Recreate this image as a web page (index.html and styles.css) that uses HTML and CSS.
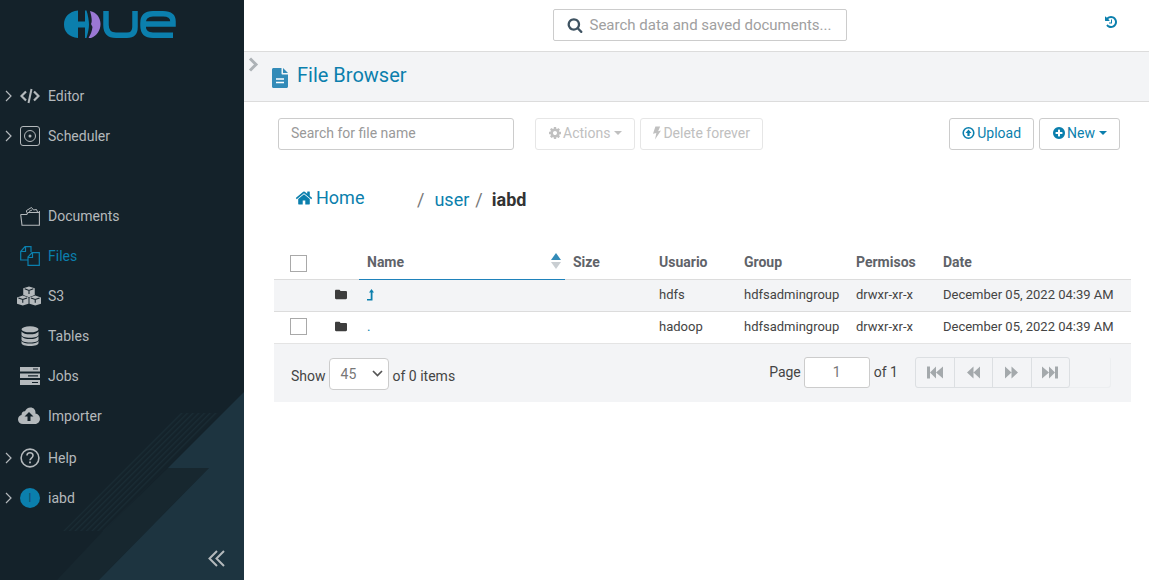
FILE: index.html
```html
<!DOCTYPE html>
<html lang="en">
<head>
    <meta charset="UTF-8">
    <title>Hue - File Browser</title>
    <link rel="stylesheet" href="styles.css">
</head>
<body>

    <!-- icon sprite -->
    <svg class="sprite" xmlns="http://www.w3.org/2000/svg">
        <symbol id="i-search" viewBox="0 0 1792 1792"><path d="M1216 832q0-185-131.500-316.500t-316.500-131.500-316.500 131.500-131.500 316.500 131.500 316.500 316.500 131.500 316.500-131.500 131.500-316.500zm512 832q0 52-38 90t-90 38q-54 0-90-38l-343-342q-179 124-399 124-143 0-273.500-55.500t-225-150-150-225-55.500-273.500 55.500-273.500 150-225 225-150 273.500-55.500 273.500 55.500 225 150 150 225 55.500 273.500q0 220-124 399l343 343q37 37 37 90z"/></symbol>
        <symbol id="i-history" viewBox="0 0 1792 1792"><path d="M1664 896q0 156-61 298t-164 245-245 164-298 61q-172 0-327-72.500t-264-204.500q-7-10-6.500-22.500t8.500-20.500l137-138q10-9 25-9 16 2 23 12 73 95 179 147t225 52q104 0 198.500-40.500t163.500-109.500 109.500-163.500 40.500-198.500-40.500-198.500-109.500-163.500-163.500-109.500-198.500-40.500q-98 0-188 35.500t-160 101.500l137 138q31 30 14 69-17 40-59 40h-448q-26 0-45-19t-19-45v-448q0-42 40-59 39-17 69 14l130 129q107-101 244.500-156.500t284.500-55.500q156 0 298 61t245 164 164 245 61 298zm-640-288v448q0 14-9 23t-23 9h-320q-14 0-23-9t-9-23v-64q0-14 9-23t23-9h224v-352q0-14 9-23t23-9h64q14 0 23 9t9 23z"/></symbol>
        <symbol id="i-cog" viewBox="0 0 1792 1792"><path d="M1152 896q0-106-75-181t-181-75-181 75-75 181 75 181 181 75 181-75 75-181zm512-109v222q0 12-8 23t-20 13l-185 28q-19 54-39 91 35 50 107 138 10 12 10 25t-9 23q-27 37-99 108t-94 71q-12 0-26-9l-138-108q-44 23-91 38-16 136-29 186-7 28-36 28h-222q-14 0-24.500-8.500t-11.500-21.500l-28-184q-49-16-90-37l-141 107q-10 9-25 9-14 0-25-11-126-114-165-168-7-10-7-23 0-12 8-23 15-21 51-66.500t54-70.500q-27-50-41-99l-183-27q-13-2-21-12.500t-8-23.500v-222q0-12 8-23t19-13l186-28q14-46 39-92-40-57-107-138-10-12-10-24 0-10 9-23 26-36 98.500-107.500t94.500-71.500q13 0 26 10l138 107q44-23 91-38 16-136 29-186 7-28 36-28h222q14 0 24.500 8.500t11.500 21.500l28 184q49 16 90 37l142-107q9-9 24-9 13 0 25 10 129 119 165 170 7 8 7 22 0 12-8 23-15 21-51 66.500t-54 70.500q26 50 41 98l183 28q13 2 21 12.500t8 23.500z"/></symbol>
        <symbol id="i-plus" viewBox="0 0 1792 1792"><path d="M1344 960v-128q0-26-19-45t-45-19h-256v-256q0-26-19-45t-45-19h-128q-26 0-45 19t-19 45v256h-256q-26 0-45 19t-19 45v128q0 26 19 45t45 19h256v256q0 26 19 45t45 19h128q26 0 45-19t19-45v-256h256q26 0 45-19t19-45zm320-64q0 209-103 385.500t-279.500 279.500-385.500 103-385.500-103-279.500-279.500-103-385.500 103-385.500 279.500-279.500 385.500-103 385.500 103 279.500 279.500 103 385.500z"/></symbol>
        <symbol id="i-home" viewBox="0 0 1792 1792"><path d="M1472 992v480q0 26-19 45t-45 19h-384v-384h-256v384h-384q-26 0-45-19t-19-45v-480q0-1 .5-3t.5-3l575-474 575 474q1 2 1 6zm223-69l-62 74q-8 9-21 11h-3q-13 0-21-7l-692-577-692 577q-12 8-24 7-13-2-21-11l-62-74q-8-10-7-23.500t11-21.500l719-599q32-26 76-26t76 26l244 204v-195q0-14 9-23t23-9h192q14 0 23 9t9 23v408l219 182q10 8 11 21.500t-7 23.500z"/></symbol>
        <symbol id="i-folder" viewBox="0 0 14 12"><path d="M1.300 0.500h3.600c.7 0 1.100.4 1.300 1l.2.500h6.300c.7 0 1.300.5 1.300 1.300v6.900c0 .8-.6 1.300-1.300 1.300H1.300C.6 11.500 0 11 0 10.200V1.800C0 1 .6.500 1.300.5z"/></symbol>
        <symbol id="i-bolt" viewBox="0 0 10 16"><path d="M3 0h6L6.400 5.800 10 5 2.500 16l1.700-8L0 8.900z"/></symbol>
    </svg>

    <div class="app">

        <aside class="sidebar">
            <svg class="sidebar-bg" viewBox="0 0 244 580" xmlns="http://www.w3.org/2000/svg">
                <defs>
                    <pattern id="hatch" width="4" height="4" patternUnits="userSpaceOnUse" patternTransform="rotate(-45)">
                        <rect width="4" height="1.300" fill="#1a2c35"/>
                    </pattern>
                </defs>
                <polygon points="57,580 103,531 168,468 209,468 99,580" fill="#17272f"/>
                <polygon points="63,531 103,531 220,413 180,413" fill="url(#hatch)"/>
                <polygon points="244,392 168,468 209,468 99,580 244,580" fill="#1d3440"/>
            </svg>

            <div class="logo">
                <svg width="120" height="32" viewBox="60 8 120 32" xmlns="http://www.w3.org/2000/svg">
                    <path d="M78 10.500C69 11.500 64 17 64 24.500S69 37 78 38V27.500H85V38H86.500C88 33 89 28 89 24.500S88 15 86.500 10.500H85V21.500H78z" fill="#0b7fad"/>
                    <path d="M90 11C97 12.500 100.500 18 100.500 24S97 36 91 38H88.500C90.500 35 92 31 92.500 27L91 24C92.500 22 91.500 16 90 11z" fill="#9a78d4"/>
                    <g fill="none" stroke="#0b7fad" stroke-width="5.500">
                        <path d="M106 11V25Q106 35.300 116 35.300H127Q135 35.300 135 27V11"/>
                        <path d="M143 24H173V21.500Q173 13.700 163 13.700H153Q143 13.700 143 23V25.500Q143 35.300 153 35.300H173"/>
                    </g>
                </svg>
            </div>

            <nav class="nav">
                <a class="nav-item">
                    <span class="caret"><svg width="7" height="12" viewBox="0 0 7 12"><path d="M1 1l5 5-5 5" fill="none" stroke="currentColor" stroke-width="1.200"/></svg></span>
                    <svg class="nav-icon" viewBox="0 0 20 20"><path d="M6 5.500L1.500 10 6 14.500M14 5.500l4.500 4.500L14 14.500" fill="none" stroke="currentColor" stroke-width="2.200"/><path d="M11.500 3l-3 14" fill="none" stroke="currentColor" stroke-width="2"/></svg>
                    <span>Editor</span>
                </a>
                <a class="nav-item">
                    <span class="caret"><svg width="7" height="12" viewBox="0 0 7 12"><path d="M1 1l5 5-5 5" fill="none" stroke="currentColor" stroke-width="1.200"/></svg></span>
                    <svg class="nav-icon" viewBox="0 0 20 20"><rect x=".5" y=".5" width="19" height="19" rx="2.500" fill="none" stroke="currentColor"/><circle cx="10" cy="10" r="5.500" fill="none" stroke="currentColor"/><circle cx="10" cy="10" r="1.500" fill="currentColor"/></svg>
                    <span>Scheduler</span>
                </a>

                <div class="nav-group">
                    <a class="nav-item">
                        <span class="caret"></span>
                        <svg class="nav-icon" viewBox="0 0 20 20"><path d="M.7 8.500L2 19.300h17.400V5M.7 8.500h6L8 6.500h11.400" fill="none" stroke="currentColor" stroke-width="1.100"/><path d="M6.500 6.500V4.500l5-3 2 2.500 3-.5 1 2.500M9 5.500l3-1.500" fill="none" stroke="currentColor" stroke-width="1"/></svg>
                        <span>Documents</span>
                    </a>
                    <a class="nav-item active">
                        <span class="caret"></span>
                        <svg class="nav-icon" viewBox="0 0 20 20"><path d="M8 14H.7V5.500L5 .7h6V6M5.500 .7V5.500H.7" fill="none" stroke="currentColor" stroke-width="1.200"/><path d="M8 19.300V11l4-4.300h7.300v12.600zM12.500 7v4.500H8" fill="none" stroke="currentColor" stroke-width="1.200"/></svg>
                        <span>Files</span>
                    </a>
                    <a class="nav-item">
                        <span class="caret"></span>
                        <svg class="nav-icon icon-wide" viewBox="0 0 25 20"><path d="M12.500 0l6 2v7l-6 2.200-6-2.200V2z" fill="currentColor"/><path d="M6 9.500l6 2.100V18l-6 2-6-2v-6.500zM19 9.500l6 2V18l-6 2-6-2v-6.400z" fill="currentColor"/><path d="M8 2.500l4.500 1.700L17 2.500M12.500 4.200V8M1.500 12l4.500 1.600 4.500-1.600M6 13.600V17M14.500 12l4.500 1.600 4.500-1.600M19 13.600V17" fill="none" stroke="#14222a" stroke-width="1.100"/></svg>
                        <span>S3</span>
                    </a>
                    <a class="nav-item">
                        <span class="caret"></span>
                        <svg class="nav-icon" viewBox="0 0 20 20"><ellipse cx="10" cy="3.300" rx="8.500" ry="3" fill="currentColor"/><path d="M1.500 5.500c1.500 2 4.500 2.800 8.500 2.800s7-.8 8.500-2.800v3.200c0 1.800-3.500 3-8.500 3s-8.500-1.200-8.500-3zM1.500 10.300c1.500 2 4.500 2.800 8.500 2.800s7-.8 8.500-2.800v3.200c0 1.800-3.500 3-8.500 3s-8.500-1.200-8.500-3zM1.500 15c1.500 2 4.500 2.500 8.500 2.500s7-.5 8.500-2.500v2c0 1.800-3.500 3-8.500 3s-8.500-1.200-8.500-3z" fill="currentColor"/></svg>
                        <span>Tables</span>
                    </a>
                    <a class="nav-item">
                        <span class="caret"></span>
                        <svg class="nav-icon" viewBox="0 0 20 20"><path d="M0 1h20v4.500H0zM0 7.500h20V12H0zM0 14h20v5H0z" fill="currentColor"/><path d="M13 3h5M8 9.800h10M12 16.500h6" stroke="#14222a" stroke-width="1.200"/></svg>
                        <span>Jobs</span>
                    </a>
                    <a class="nav-item">
                        <span class="caret"></span>
                        <svg class="nav-icon icon-wide" viewBox="0 0 22 20"><path d="M5 18C2 18 0 16 0 13.500S1.500 9.500 3.500 9C3.500 6.500 5 5 7 5.200 8 3 10 1.500 12.500 1.500c3 0 5 2.300 5 5 0 .3 0 .7-.1 1 2.500.3 4.600 2.500 4.600 5.200S20 18 17 18z" fill="currentColor"/><path d="M11 6l4.500 4.500h-3V15h-3v-4.500h-3z" fill="#14222a"/></svg>
                        <span>Importer</span>
                    </a>
                </div>

                <div class="nav-group-small">
                    <a class="nav-item">
                        <span class="caret"><svg width="7" height="12" viewBox="0 0 7 12"><path d="M1 1l5 5-5 5" fill="none" stroke="currentColor" stroke-width="1.200"/></svg></span>
                        <svg class="nav-icon" viewBox="0 0 20 20"><circle cx="10" cy="10" r="8.900" fill="none" stroke="currentColor" stroke-width="1.600"/><path d="M7 7.500C7 5.500 8.500 4.800 10 4.800s3 1 3 2.700c0 2.500-3 2.500-3 4.800" fill="none" stroke="currentColor" stroke-width="1.600"/><rect x="9.100" y="13.500" width="1.800" height="1.800" fill="currentColor"/></svg>
                        <span>Help</span>
                    </a>
                    <a class="nav-item">
                        <span class="caret"><svg width="7" height="12" viewBox="0 0 7 12"><path d="M1 1l5 5-5 5" fill="none" stroke="currentColor" stroke-width="1.200"/></svg></span>
                        <span class="avatar">I</span>
                        <span>iabd</span>
                    </a>
                </div>
            </nav>

            <div class="collapse">
                <svg width="17" height="17" viewBox="0 0 17 17"><path d="M9 1L1.500 8.500 9 16M16 1L8.500 8.500 16 16" fill="none" stroke="currentColor" stroke-width="2"/></svg>
            </div>
        </aside>

        <main class="main">

            <header class="topbar">
                <div class="global-search">
                    <svg class="icon-search"><use href="#i-search"/></svg>
                    <span>Search data and saved documents...</span>
                </div>
                <svg class="icon-history"><use href="#i-history"/></svg>
            </header>

            <div class="title-band">
                <svg class="band-chevron" width="11" height="15" viewBox="0 0 11 15"><path d="M2 1.500l6 6-6 6" fill="none" stroke="#adb2b6" stroke-width="3"/></svg>
                <svg class="title-icon" width="16" height="20" viewBox="0 0 16 20"><path d="M0 1.500C0 .7.700 0 1.500 0H9.500v5.500c0 .6.400 1 1 1H16v12c0 .8-.7 1.500-1.500 1.500h-13C.7 20 0 19.300 0 18.500z" fill="#338bb8"/><path d="M11 0l5 5h-5z" fill="#338bb8"/><path d="M4 11h8M4 14.500h8" stroke="#fff" stroke-width="1.500"/></svg>
                <h1>File Browser</h1>
            </div>

            <div class="content">

                <div class="toolbar">
                    <div class="input file-search">Search for file name</div>
                    <button class="btn disabled actions-btn"><svg class="btn-icon"><use href="#i-cog"/></svg>Actions<i class="tri"></i></button>
                    <button class="btn disabled"><svg class="btn-icon bolt"><use href="#i-bolt"/></svg>Delete forever</button>
                    <button class="btn upload-btn">
                        <svg class="btn-icon upload-icon" viewBox="0 0 14 14"><circle cx="7" cy="7" r="5.700" fill="none" stroke="currentColor" stroke-width="1.700"/><path d="M7 3.300L10.200 7H8.200v3.200H5.800V7h-2z" fill="currentColor"/></svg>Upload
                    </button>
                    <button class="btn"><svg class="btn-icon"><use href="#i-plus"/></svg>New<i class="tri"></i></button>
                </div>

                <div class="crumbs">
                    <a class="crumb-home"><svg class="home-icon"><use href="#i-home"/></svg>Home</a>
                    <span class="crumb-sep first">/</span>
                    <a>user</a>
                    <span class="crumb-sep">/</span>
                    <strong>iabd</strong>
                </div>

                <table class="files">
                    <colgroup>
                        <col class="c-check"><col class="c-icon"><col class="c-name"><col class="c-size">
                        <col class="c-user"><col class="c-group"><col class="c-perm"><col class="c-date">
                    </colgroup>
                    <thead>
                        <tr>
                            <th class="cell-check"><span class="checkbox head-check"></span></th>
                            <th></th>
                            <th class="sorted">Name
                                <svg class="sort" width="10" height="16" viewBox="0 0 10 16"><path d="M5 0l5 7H0z" fill="#338bb8"/><path d="M5 16L0 9h10z" fill="#c9ced2"/></svg>
                            </th>
                            <th>Size</th>
                            <th>Usuario</th>
                            <th>Group</th>
                            <th>Permisos</th>
                            <th>Date</th>
                        </tr>
                    </thead>
                    <tbody>
                        <tr class="row-up">
                            <td></td>
                            <td class="cell-folder"><svg class="folder"><use href="#i-folder"/></svg></td>
                            <td class="link"><svg class="level-up" width="7" height="12" viewBox="0 0 7 12"><path d="M4.500 0L7 3.500H5.500V11.500H0V10H3.700V3.500H2z" fill="#0b7fad"/></svg></td>
                            <td></td>
                            <td>hdfs</td>
                            <td>hdfsadmingroup</td>
                            <td>drwxr-xr-x</td>
                            <td>December 05, 2022 04:39 AM</td>
                        </tr>
                        <tr>
                            <td class="cell-check"><span class="checkbox"></span></td>
                            <td class="cell-folder"><svg class="folder"><use href="#i-folder"/></svg></td>
                            <td class="link">.</td>
                            <td></td>
                            <td>hadoop</td>
                            <td>hdfsadmingroup</td>
                            <td>drwxr-xr-x</td>
                            <td>December 05, 2022 04:39 AM</td>
                        </tr>
                    </tbody>
                </table>

                <div class="pagination">
                    <div class="show">
                        <span class="show-label">Show</span>
                        <span class="select">45
                            <svg width="11" height="7" viewBox="0 0 11 7"><path d="M1 1l4.500 4.500L10 1" fill="none" stroke="#555" stroke-width="1.700"/></svg>
                        </span>
                        <span class="show-label">of 0 items</span>
                    </div>
                    <div class="pager">
                        Page
                        <span class="page-input">1</span>
                        of 1
                        <div class="pager-track">
                            <div class="pager-btns">
                                <span class="page-btn"><svg width="16" height="13" viewBox="0 0 16 12"><path d="M0 0h3v12H0zM9 0v12L3 6zM16 0v12l-7-6z" fill="#a4a9ac"/></svg></span>
                                <span class="page-btn"><svg width="13" height="13" viewBox="0 0 13 12"><path d="M6.500 0v12L0 6zM13 0v12L6.500 6z" fill="#a4a9ac"/></svg></span>
                                <span class="page-btn"><svg width="13" height="13" viewBox="0 0 13 12"><path d="M0 0v12l6.500-6zM6.500 0v12L13 6z" fill="#a4a9ac"/></svg></span>
                                <span class="page-btn"><svg width="16" height="13" viewBox="0 0 16 12"><path d="M0 0v12l7-6zM7 0v12l6-6zM13 0h3v12h-3z" fill="#a4a9ac"/></svg></span>
                            </div>
                        </div>
                    </div>
                </div>

            </div>
        </main>
    </div>

</body>
</html>
```

FILE: styles.css
```css
* {
    box-sizing: border-box;
}

body {
    margin: 0;
    font-family: Roboto, "Liberation Sans", sans-serif;
    font-size: 14px;
    color: #444;
    background-color: white;
}

.sprite {
    display: none;
}

.app {
    display: flex;
    height: 580px;
    overflow: hidden;
}

/* sidebar */
.sidebar {
    position: relative;
    display: flex;
    flex-direction: column;
    width: 244px;
    flex-shrink: 0;
    background-color: #14222a;
    color: #b4b9bc;
}

.sidebar-bg {
    position: absolute;
    left: 0;
    top: 0;
    width: 244px;
    height: 580px;
}

.logo {
    position: relative;
    height: 76px;
    padding: 8px 0 0 60px;
}

.logo svg {
    display: block;
}

.nav {
    position: relative;
}

.nav-group {
    margin-top: 40px;
}

.nav-group-small {
    margin-top: 2px;
}

.nav-item {
    display: flex;
    align-items: center;
    height: 40px;
    font-size: 14px;
}

.nav-item.active {
    color: #0b7fad;
}

.caret {
    display: flex;
    width: 20px;
    padding-left: 5px;
}

.nav-icon {
    width: 20px;
    height: 20px;
    margin-right: 8px;
}

.nav-icon.icon-wide {
    width: 24px;
    margin-left: -3px;
    margin-right: 7px;
}

.avatar {
    display: flex;
    align-items: center;
    justify-content: center;
    width: 20px;
    height: 20px;
    margin-right: 8px;
    border-radius: 50%;
    background-color: #0b7fad;
    color: #14506f;
    font-size: 12px;
}

.collapse {
    position: relative;
    display: flex;
    align-items: center;
    justify-content: flex-end;
    height: 44px;
    margin-top: auto;
    padding-right: 19px;
    color: #b4b9bc;
}

/* main area */
.main {
    flex: 1;
    min-width: 0;
}

.topbar {
    position: relative;
    display: flex;
    justify-content: center;
    align-items: center;
    height: 52px;
    padding: 0 0 1px 6px;
    border-bottom: 1px solid #dcdcdc;
}

.global-search {
    display: flex;
    align-items: center;
    width: 294px;
    height: 32px;
    padding-left: 13px;
    border: 1px solid #ccc;
    border-radius: 2px;
    font-size: 15px;
    white-space: nowrap;
    color: #a0a0a0;
}

.icon-search {
    width: 16px;
    height: 16px;
    margin-right: 7px;
    fill: #3f5362;
}

.icon-history {
    position: absolute;
    right: 31px;
    top: 15px;
    width: 14px;
    height: 14px;
    fill: #0b7fad;
}

.title-band {
    display: flex;
    align-items: center;
    height: 50px;
    padding-left: 4px;
    padding-bottom: 3px;
    background-color: #f3f4f6;
    border-bottom: 1px solid #dcdcdc;
}

.band-chevron {
    align-self: flex-start;
    margin-top: 5px;
    margin-right: 13px;
}

.title-icon {
    margin-top: 5px;
    margin-right: 9px;
}

.title-band h1 {
    margin: 0;
    font-size: 20px;
    font-weight: 400;
    color: #0b7fad;
}

.content {
    padding: 16px 18px 0 30px;
}

.toolbar {
    display: flex;
    align-items: center;
    padding-left: 4px;
    padding-right: 11px;
}

.input {
    height: 32px;
    border: 1px solid #ccc;
    border-radius: 3px;
    line-height: 29px;
    padding-left: 12px;
    color: #999;
}

.file-search {
    width: 236px;
    margin-right: 21px;
}

.btn {
    display: flex;
    align-items: center;
    height: 32px;
    padding: 0 12px 2px;
    margin-right: 5px;
    border: 1px solid #ccc;
    border-radius: 3px;
    background: white;
    font-family: inherit;
    font-size: 14px;
    color: #0b7fad;
}

.btn:last-child {
    margin-right: 0;
}

.btn.disabled {
    border-color: #e6e6e6;
    color: #c0c0c0;
}

.upload-btn {
    margin-left: auto;
}

.btn-icon {
    width: 14px;
    height: 14px;
    margin-right: 1px;
    fill: currentColor;
}

.btn-icon.bolt {
    width: 8px;
    margin-right: 2px;
}

.btn-icon.upload-icon {
    width: 13px;
    margin-right: 2px;
}

.tri {
    display: inline-block;
    margin-left: 4px;
    border-top: 4px solid currentColor;
    border-left: 4px solid transparent;
    border-right: 4px solid transparent;
}

.crumbs {
    display: flex;
    align-items: baseline;
    height: 32px;
    margin-top: 36px;
    padding-left: 21px;
    font-size: 18px;
    color: #777;
}

.crumbs a {
    color: #0b7fad;
}

.crumbs .crumb-home {
    display: flex;
    align-items: center;
    width: 122px;
    position: relative;
    top: 1px;
}

.home-icon {
    width: 18px;
    height: 18px;
    margin-right: 3px;
    fill: #0b7fad;
}

.crumb-sep {
    margin-left: 6px;
    margin-right: 9px;
}

.crumb-sep.first {
    margin-left: 0;
    margin-right: 10px;
}

.crumbs strong {
    color: #333;
    font-weight: 700;
}

/* table */
.files {
    width: 857px;
    margin-top: 26px;
    border-collapse: separate;
    border-spacing: 0;
    table-layout: fixed;
    color: #444;
    font-size: 13px;
}

.c-check { width: 53px; }
.c-icon { width: 32px; }
.c-name { width: 206px; }
.c-size { width: 86px; }
.c-user { width: 85px; }
.c-group { width: 112px; }
.c-perm { width: 87px; }
.c-date { width: 196px; }

.files th {
    height: 36px;
    padding: 0 8px;
    text-align: left;
    font-weight: 700;
    font-size: 14px;
    color: #5f6369;
    border-bottom: 1px solid #dcdcdc;
}

.files th.sorted {
    position: relative;
    border-bottom: 1px solid #1f82bb;
}

.sort {
    position: absolute;
    right: 4px;
    top: 9px;
}

.files td {
    height: 32px;
    padding: 0 8px 2px;
    border-bottom: 1px solid #e4e4e4;
}

.row-up td {
    background-color: #f3f4f6;
    border-bottom-color: #dcdcdc;
}

.files .cell-check {
    padding-left: 16px;
}

.files .cell-folder {
    padding-left: 8px;
}

.folder {
    display: block;
    width: 12px;
    height: 11px;
    fill: #3d3d3d;
}

.link {
    color: #0b7fad;
}

.level-up {
    display: block;
}

.checkbox {
    display: block;
    width: 17px;
    height: 17px;
    border: 1px solid #a9a9a9;
    background: white;
}

.head-check {
    margin-top: 4px;
}

.pagination {
    display: flex;
    align-items: center;
    justify-content: space-between;
    width: 857px;
    height: 58px;
    padding-left: 17px;
    padding-right: 20px;
    background-color: #f3f4f6;
}

.show {
    display: flex;
    align-items: center;
    gap: 4px;
    margin-top: 1px;
}

.show-label {
    margin-top: 4px;
}

.select {
    display: flex;
    align-items: center;
    justify-content: space-between;
    width: 60px;
    height: 32px;
    margin-left: -1px;
    padding: 0 5px 0 11px;
    border: 1px solid #ccc;
    border-radius: 4px;
    background: white;
    color: #777;
}

.pager {
    display: flex;
    align-items: center;
    gap: 3px;
    margin-bottom: 2px;
}

.page-input {
    width: 66px;
    height: 31px;
    margin-right: 1px;
    border: 1px solid #ccc;
    border-radius: 3px;
    background: white;
    text-align: center;
    line-height: 29px;
    color: #777;
}

.pager-track {
    width: 196px;
    height: 31px;
    margin-left: 14px;
    border-radius: 3px;
    box-shadow: inset -1px -1px 0 #eceef0;
}

.pager-btns {
    display: flex;
    width: 155px;
    height: 31px;
    border: 1px solid #dcdfe2;
    border-radius: 3px;
}

.page-btn {
    display: flex;
    align-items: center;
    justify-content: center;
    flex: 1;
    border-right: 1px solid #dcdfe2;
}

.page-btn:last-child {
    border-right: none;
}
```
